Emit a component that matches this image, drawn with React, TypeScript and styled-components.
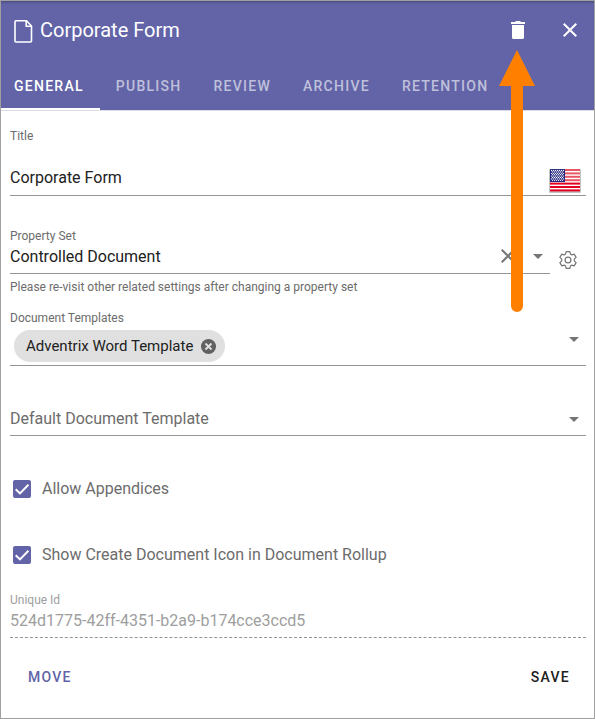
import React, { useId, useState } from "react";
import styled, { createGlobalStyle } from "styled-components";

const purple = "#6264a7";

const GlobalStyle = createGlobalStyle`
  * { box-sizing: border-box; }
  body { margin: 0; background: #fff; }
  body, button, input, select { font-family: Roboto, "Liberation Sans", sans-serif; }
  button { border: 0; background: none; padding: 0; cursor: pointer; }
  svg { display: block; }
`;

const Panel = styled.main`
  position: relative;
  display: flex;
  flex-direction: column;
  min-height: 100vh;
  border: 1px solid #a0a0a0;
  background: #fff;
`;

const Header = styled.header`
  background: ${purple};
  color: #fff;
  border-bottom: 1px solid #dcdce2;
  box-shadow: inset 0 3px 3px -2px rgba(0, 0, 0, 0.3);
`;

const TitleRow = styled.div`
  display: flex;
  align-items: center;
  height: 60px;
  padding: 0 14px 2px 12px;
`;

const Heading = styled.h1`
  flex: 1;
  margin: 0 0 0 7px;
  font-size: 20px;
  line-height: 28px;
  font-weight: 400;
`;

const HeaderButton = styled.button`
  display: grid;
  place-items: center;
  width: 22px;
  height: 28px;
  margin-left: 29px;
  color: #fff;
`;

const Tabs = styled.div`
  display: flex;
  height: 49px;
`;

const Tab = styled.button<{ $active: boolean }>`
  padding: 2px 16px 0;
  color: ${(p) => (p.$active ? "#fff" : "rgba(255, 255, 255, 0.6)")};
  border-bottom: 2px solid ${(p) => (p.$active ? "#fff" : "transparent")};
  font-size: 14px;
  font-weight: 500;
  letter-spacing: 0.09em;
  text-transform: uppercase;

  &:first-child { padding-left: 13px; }
`;

const Form = styled.form`
  display: flex;
  flex-direction: column;
  flex: 1;
  padding: 16px 8px 0 9px;
`;

const Field = styled.div<{ $gap?: number; $muted?: boolean }>`
  display: flex;
  flex-direction: column;
  flex: 1 1 auto;
  min-width: 0;
  margin-top: ${(p) => p.$gap ?? 0}px;
  color: ${(p) => (p.$muted ? "#9e9e9e" : "#6c6c6c")};
`;

const Label = styled.label`
  font-size: 12px;
  line-height: 18px;
`;

const Line = styled.div<{ $height: number; $top?: number; $bottom?: number; $dashed?: boolean }>`
  display: flex;
  align-items: center;
  height: ${(p) => p.$height}px;
  padding: ${(p) => p.$top ?? 0}px 0 ${(p) => p.$bottom ?? 0}px;
  border-bottom: 1px ${(p) => (p.$dashed ? "dashed" : "solid")} #949494;
`;

const TextInput = styled.input`
  flex: 1;
  min-width: 0;
  height: 24px;
  padding: 0;
  border: 0;
  outline: 0;
  background: none;
  color: #212121;
  font-size: 16px;

  &:disabled { color: #9e9e9e; }
`;

const Select = styled.select<{ $empty?: boolean }>`
  appearance: none;
  flex: 1;
  min-width: 0;
  height: 24px;
  padding: 0;
  border: 0;
  outline: 0;
  background: none;
  color: ${(p) => (p.$empty ? "#6c6c6c" : "#212121")};
  font-size: 16px;
`;

const Arrow = styled.svg<{ $raised?: boolean }>`
  flex: none;
  align-self: ${(p) => (p.$raised ? "flex-start" : "center")};
  width: 24px;
  height: 24px;
  fill: #757575;
  pointer-events: none;
`;

const PropertyRow = styled.div`
  display: flex;
  align-items: flex-start;
  margin-top: 31px;
`;

const GearButton = styled.button`
  display: grid;
  place-items: center;
  width: 36px;
  height: 36px;
  margin-top: 15px;
  color: #757575;
`;

const IconButton = styled.button`
  display: grid;
  place-items: center;
  width: 24px;
  height: 24px;
  margin-right: 6px;
`;

const Hint = styled.p`
  margin: 4px 0 0;
  font-size: 12px;
  line-height: 18px;
`;

const Chip = styled.span`
  display: flex;
  align-items: center;
  gap: 7px;
  height: 32px;
  margin-left: 4px;
  padding: 0 8px 0 12px;
  border-radius: 16px;
  background: #e0e0e0;
  color: #212121;
  font-size: 15px;
`;

const CheckRow = styled.label<{ $gap: number }>`
  display: flex;
  align-items: center;
  gap: 11px;
  height: 24px;
  margin-top: ${(p) => p.$gap}px;
  padding-left: 3px;
  color: #6c6c6c;
  font-size: 16px;
  line-height: 20px;
`;

const CheckHolder = styled.span`
  display: grid;
  width: 18px;
  height: 18px;

  > * { grid-area: 1 / 1; }
  svg { pointer-events: none; }
`;

const CheckInput = styled.input`
  appearance: none;
  width: 18px;
  height: 18px;
  margin: 0;
  border: 2px solid #757575;
  border-radius: 2px;

  &:checked { background: ${purple}; border-color: ${purple}; }
`;

const FlagIcon = styled.svg`
  flex: none;
  width: 32px;
  height: 26px;
  margin: 8px 5px 0 0;
`;

const Actions = styled.div`
  display: flex;
  justify-content: space-between;
  padding: 21px 0 23px;
`;

const Action = styled.button<{ $color: string }>`
  height: 36px;
  padding: 0 16px 0 18px;
  color: ${(p) => p.$color};
  font-size: 14px;
  font-weight: 500;
  letter-spacing: 0.09em;
`;

const Pointer = styled.svg`
  position: absolute;
  top: 49px;
  right: 58px;
  width: 37px;
  height: 262px;
  fill: #ff8000;
  pointer-events: none;
`;

function DocumentIcon() {
  return (
    <svg width="20" height="26" viewBox="0 0 20 26" fill="none" stroke="#fff" strokeWidth="1.6" aria-hidden="true">
      <path d="M3 3.800h10.500l5 5.200v15q0 1-1 1H3q-1 0-1-1V4.800q0-1 1-1z" />
      <path d="M13.200 4v5.200h5.200" />
    </svg>
  );
}

function DropArrow({ raised }: { raised?: boolean }) {
  return (
    <Arrow $raised={raised} viewBox="0 0 24 24" aria-hidden="true">
      <path d="M7 10l5 5 5-5z" />
    </Arrow>
  );
}

function Cross({ size, color }: { size: number; color: string }) {
  return (
    <svg width={size} height={size} viewBox="0 0 24 24" fill={color} aria-hidden="true">
      <path d="M19 6.41L17.59 5 12 10.59 6.41 5 5 6.41 10.59 12 5 17.59 6.41 19 12 13.41 17.59 19 19 17.59 13.41 12z" />
    </svg>
  );
}

function Gear() {
  return (
    <svg width="20" height="20" viewBox="0 0 20 20" fill="none" stroke="currentColor" strokeWidth="1.2" strokeLinejoin="round" aria-hidden="true">
      <circle cx="10" cy="10" r="2.9" />
      <path d="M8.1 1.7h3.8l.5 2.4 1.4.8 2.4-.8 1.9 3.3-1.8 1.7v1.8l1.8 1.700-1.900 3.300-2.400-.8-1.400.8-.5 2.400H8.100l-.5-2.400-1.400-.8-2.400.8-1.900-3.300 1.800-1.700V9.100L1.900 7.400l1.900-3.300 2.400.8 1.400-.8z" />
    </svg>
  );
}

function Flag() {
  const stars = Array.from({ length: 8 }, (_, row) =>
    Array.from({ length: row % 2 ? 6 : 7 }, (_, col) => (
      <circle key={`${row}-${col}`} cx={2.5 + col * 2 + (row % 2)} cy={2.5 + row * 1.4} r="0.65" fill="#fff" />
    )),
  );
  return (
    <FlagIcon viewBox="0 0 32 26" role="img" aria-label="English (United States)">
      <rect x="0" y="1" width="32" height="24" rx="1" fill="#c4c4c4" />
      <rect x="1" y="1" width="30" height="22" fill="#fff" />
      {[0, 1, 2, 3, 4, 5, 6].map((n) => (
        <rect key={n} x="1" y={1 + n * 3.4} width="30" height="2" fill={n < 4 ? "#ea5566" : "#e2001f"} />
      ))}
      <rect x="1" y="1" width="15" height="13" fill="#23277d" />
      {stars}
    </FlagIcon>
  );
}

function Check({ label, gap }: { label: string; gap: number }) {
  return (
    <CheckRow $gap={gap}>
      <CheckHolder>
        <CheckInput type="checkbox" defaultChecked />
        <svg width="18" height="18" viewBox="0 0 18 18" fill="none" stroke="#fff" strokeWidth="2" aria-hidden="true">
          <path d="M2.7 9.2l4.3 4.2 8.4-8.6" />
        </svg>
      </CheckHolder>
      {label}
    </CheckRow>
  );
}

const tabs = ["General", "Publish", "Review", "Archive", "Retention"];

export default function App() {
  const [active, setActive] = useState(tabs[0]);
  const id = useId();

  return (
    <>
      <GlobalStyle />
      <Panel>
        <Header>
          <TitleRow>
            <DocumentIcon />
            <Heading>Corporate Form</Heading>
            <HeaderButton type="button" aria-label="Delete">
              <svg width="22" height="24" viewBox="0 0 22 24" fill="currentColor" aria-hidden="true">
                <path d="M4 4h4l1-1h4l1 1h4v2H4zM5 7h12v12.500q0 1.500-1.500 1.500h-9Q5 21 5 19.500z" />
              </svg>
            </HeaderButton>
            <HeaderButton type="button" aria-label="Close">
              <Cross size={24} color="#fff" />
            </HeaderButton>
          </TitleRow>
          <Tabs role="tablist">
            {tabs.map((tab) => (
              <Tab key={tab} type="button" role="tab" aria-selected={tab === active} $active={tab === active} onClick={() => setActive(tab)}>
                {tab}
              </Tab>
            ))}
          </Tabs>
        </Header>

        <Form onSubmit={(e) => e.preventDefault()}>
          <Field>
            <Label htmlFor={`${id}-title`}>Title</Label>
            <Line $height={51} $top={14}>
              <TextInput id={`${id}-title`} defaultValue="Corporate Form" />
              <Flag />
            </Line>
          </Field>

          <PropertyRow>
            <Field>
              <Label htmlFor={`${id}-set`}>Property Set</Label>
              <Line $height={29} $bottom={6}>
                <Select id={`${id}-set`}>
                  <option>Controlled Document</option>
                </Select>
                <IconButton type="button" aria-label="Clear property set">
                  <Cross size={24} color="#757575" />
                </IconButton>
                <DropArrow />
              </Line>
              <Hint>Please re-visit other related settings after changing a property set</Hint>
            </Field>
            <GearButton type="button" aria-label="Property set settings">
              <Gear />
            </GearButton>
          </PropertyRow>

          <Field $gap={13}>
            <Label htmlFor={`${id}-templates`}>Document Templates</Label>
            <Line $height={39}>
              <Chip>
                Adventrix Word Template
                <button type="button" aria-label="Remove Adventrix Word Template">
                  <svg width="17" height="17" viewBox="0 0 18 18" aria-hidden="true">
                    <circle cx="9" cy="9" r="8" fill="#616161" />
                    <path d="M5.800 5.800l6.400 6.400m0-6.400l-6.400 6.400" stroke="#e0e0e0" strokeWidth="2" />
                  </svg>
                </button>
              </Chip>
              <Select id={`${id}-templates`} defaultValue="">
                <option value="" />
              </Select>
              <DropArrow raised />
            </Line>
          </Field>

          <Field $gap={36}>
            <Line $height={34}>
              <Select aria-label="Default Document Template" $empty defaultValue="">
                <option value="">Default Document Template</option>
              </Select>
              <DropArrow />
            </Line>
          </Field>

          <Check label="Allow Appendices" gap={41} />
          <Check label="Show Create Document Icon in Document Rollup" gap={42} />

          <Field $gap={24} $muted>
            <Label htmlFor={`${id}-uid`}>Unique Id</Label>
            <Line $height={29} $bottom={6} $dashed>
              <TextInput id={`${id}-uid`} disabled defaultValue="524d1775-42ff-4351-b2a9-b174cce3ccd5" />
            </Line>
          </Field>

          <Actions>
            <Action type="button" $color={purple}>MOVE</Action>
            <Action type="submit" $color="#212121">SAVE</Action>
          </Actions>
        </Form>

        <Pointer viewBox="0 0 37 262" aria-hidden="true">
          <path d="M18 0L36 36H24V256a6 6 0 0 1-12 0V36H0z" />
        </Pointer>
      </Panel>
    </>
  );
}
